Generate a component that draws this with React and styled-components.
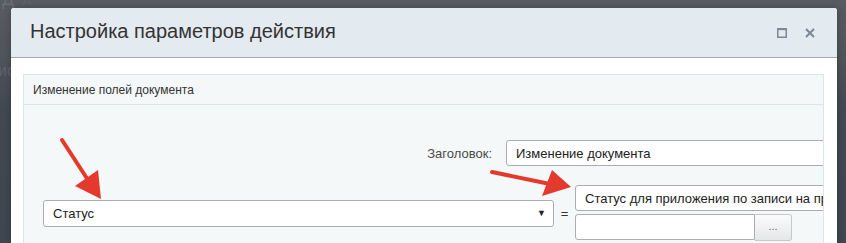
import React from "react";
import styled, { createGlobalStyle } from "styled-components";

const GlobalStyle = createGlobalStyle`
  html, body {
    margin: 0;
    padding: 0;
    background: #4a4f57;
  }
  * {
    box-sizing: border-box;
  }
`;

const Page = styled.div`
  position: relative;
  width: 846px;
  height: 243px;
  overflow: hidden;
  padding: 8px 9px 0 11px;
  background: linear-gradient(to bottom, #585b61 0px, #4f535a 60px, #414851 110px, #3e4650 243px);
  font-family: "Liberation Sans", Arial, sans-serif;
  color: #333;
`;

const BackdropText = styled.div`
  position: absolute;
  left: ${(p) => p.$x}px;
  top: ${(p) => p.$y}px;
  font-size: ${(p) => p.$size}px;
  color: rgba(255, 255, 255, 0.12);
  white-space: nowrap;
`;

const Dialog = styled.div`
  position: relative;
  height: 100%;
  background: #fff;
  border-radius: 3px 3px 0 0;
  box-shadow: 0 0 6px rgba(0, 0, 0, 0.25);
  display: flex;
  flex-direction: column;
`;

const Header = styled.div`
  height: 50px;
  flex: none;
  display: flex;
  align-items: center;
  padding: 0 22px 0 19px;
  background: #e3eaf0;
  border-radius: 3px 3px 0 0;
  border-bottom: 1px solid #a4a8ad;
`;

const Title = styled.div`
  flex: 1;
  font-size: 20px;
  color: #333;
  padding-bottom: 2px;
`;

const IconButton = styled.div`
  width: 10px;
  height: 10px;
  margin-left: ${(p) => p.$gap || 0}px;
  display: flex;
  align-items: center;
  justify-content: center;
`;

const Body = styled.div`
  flex: 1;
  padding: 16px 13px 0 12px;
`;

const Panel = styled.div`
  border: 1px solid #dde5e9;
  border-bottom: none;
  background: #f5f8f9;
  height: 100%;
  overflow: hidden;
`;

const PanelHeader = styled.div`
  height: 30px;
  display: flex;
  align-items: center;
  padding-left: 9px;
  font-size: 12px;
  color: #333;
  border-bottom: 1px solid #dde5e9;
`;

const Form = styled.div`
  padding-top: 35px;
  display: flex;
  flex-direction: column;
  gap: 19px;
`;

const LabelRow = styled.div`
  display: flex;
  align-items: center;
`;

const Label = styled.div`
  width: 482px;
  flex: none;
  text-align: right;
  padding-right: 14px;
  font-size: 13px;
  color: #4a4a4a;
`;

const TextBox = styled.div`
  flex: none;
  width: ${(p) => p.$w}px;
  height: 26px;
  display: flex;
  align-items: center;
  padding: 0 9px;
  background: #fff;
  border: 1px solid #a9aeb3;
  border-radius: ${(p) => p.$radius || "3px"};
  font-size: 13px;
  color: #222;
  white-space: nowrap;
  overflow: hidden;
`;

const FieldRow = styled.div`
  display: flex;
  align-items: center;
  padding-left: 19px;
`;

const Select = styled.div`
  width: 511px;
  height: 27px;
  flex: none;
  display: flex;
  align-items: center;
  justify-content: space-between;
  padding: 0 7px 0 9px;
  background: #fff;
  border: 1px solid #a9aeb3;
  border-radius: 3px;
  font-size: 13px;
  color: #222;
`;

const Caret = styled.span`
  font-size: 9px;
  color: #222;
`;

const Equals = styled.div`
  width: 21px;
  flex: none;
  text-align: center;
  font-size: 13px;
  color: #333;
`;

const ValueStack = styled.div`
  display: flex;
  flex-direction: column;
  gap: 3px;
`;

const PickRow = styled.div`
  display: flex;
`;

const DotsButton = styled.div`
  width: 37px;
  height: 27px;
  display: flex;
  align-items: center;
  justify-content: center;
  padding-bottom: 4px;
  background: linear-gradient(to bottom, #fbfbfb, #e4e7e9);
  border: 1px solid #c4c9cd;
  border-left: none;
  border-radius: 0 3px 3px 0;
  font-size: 11px;
  color: #666;
`;

const Overlay = styled.svg`
  position: absolute;
  left: 0;
  top: 0;
  pointer-events: none;
`;

const RED = "#e33a2d";

export default function App() {
  return (
    <>
      <GlobalStyle />
      <Page>
        <BackdropText $x={2} $y={-12} $size={18}>Д ☆</BackdropText>
        <BackdropText $x={-2} $y={62} $size={16}>ис</BackdropText>
        <Dialog>
          <Header>
            <Title>Настройка параметров действия</Title>
            <IconButton>
              <svg width="10" height="10" viewBox="0 0 10 10">
                <rect x="0.75" y="0.75" width="8.5" height="8.5" fill="none" stroke="#7d8896" strokeWidth="1.5" />
                <rect x="0" y="0" width="10" height="2.2" fill="#7d8896" />
              </svg>
            </IconButton>
            <IconButton $gap={18}>
              <svg width="10" height="10" viewBox="0 0 10 10">
                <path d="M1 1 L9 9 M9 1 L1 9" stroke="#7d8896" strokeWidth="2" />
              </svg>
            </IconButton>
          </Header>
          <Body>
            <Panel>
              <PanelHeader>Изменение полей документа</PanelHeader>
              <Form>
                <LabelRow>
                  <Label>Заголовок:</Label>
                  <TextBox $w={340}>Изменение документа</TextBox>
                </LabelRow>
                <FieldRow>
                  <Select>
                    <span>Статус</span>
                    <Caret>▼</Caret>
                  </Select>
                  <Equals>=</Equals>
                  <ValueStack>
                    <TextBox $w={270}>Статус для приложения по записи на прием</TextBox>
                    <PickRow>
                      <TextBox $w={180} $radius="3px 0 0 3px" />
                      <DotsButton>...</DotsButton>
                    </PickRow>
                  </ValueStack>
                </FieldRow>
              </Form>
            </Panel>
          </Body>
        </Dialog>
        <Overlay width="846" height="243" viewBox="0 0 846 243">
          <line x1="62" y1="140" x2="88" y2="180" stroke={RED} strokeWidth="4" strokeLinecap="round" />
          <polygon points="75,186 98,170 101,199" fill={RED} />
          <line x1="492" y1="172" x2="550" y2="184" stroke={RED} strokeWidth="4" strokeLinecap="round" />
          <polygon points="552,170 542,196 571,187" fill={RED} />
        </Overlay>
      </Page>
    </>
  );
}
